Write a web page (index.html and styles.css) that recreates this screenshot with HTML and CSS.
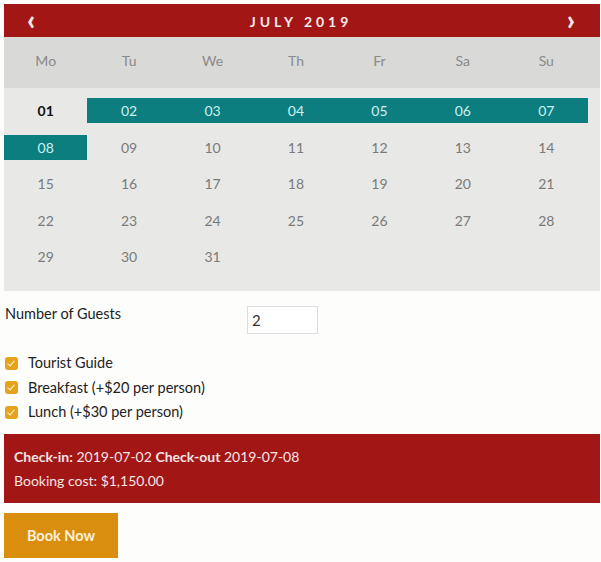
FILE: index.html
```html
<!DOCTYPE html>
<html>
  <head>
    <title>Booking</title>
    <link rel="stylesheet" href="styles.css">
  </head>
  <body>
    <section class='calendar'>
      <header class='cal-head'>
        <span class='arrow'>&#x2039;</span>
        <span class='month'>July 2019</span>
        <span class='arrow'>&#x203A;</span>
      </header>
      <div class='weekdays'>
        <span>Mo</span><span>Tu</span><span>We</span><span>Th</span><span>Fr</span><span>Sa</span><span>Su</span>
      </div>
      <div class='days'>
        <span class='today'>01</span>
        <span class='picked'>02</span>
        <span class='picked'>03</span>
        <span class='picked'>04</span>
        <span class='picked'>05</span>
        <span class='picked'>06</span>
        <span class='picked'>07</span>
        <span class='picked'>08</span>
        <span>09</span><span>10</span><span>11</span><span>12</span><span>13</span><span>14</span>
        <span>15</span><span>16</span><span>17</span><span>18</span><span>19</span><span>20</span><span>21</span>
        <span>22</span><span>23</span><span>24</span><span>25</span><span>26</span><span>27</span><span>28</span>
        <span>29</span><span>30</span><span>31</span>
      </div>
    </section>

    <div class='guests'>
      <label for='guests'>Number of Guests</label>
      <input type='text' id='guests' value='2'/>
    </div>

    <ul class='extras'>
      <li><span class='check'></span>Tourist Guide</li>
      <li><span class='check'></span>Breakfast (+$20 per person)</li>
      <li><span class='check'></span>Lunch (+$30 per person)</li>
    </ul>

    <div class='summary'>
      <p><b>Check-in:</b> 2019-07-02 <b>Check-out</b> 2019-07-08</p>
      <p>Booking cost: $1,150.00</p>
    </div>

    <button class='book'>Book Now</button>
  </body>
</html>
```

FILE: styles.css
```css
html, body {
  margin: 0;
  background: #fdfdfc;
  color: #222;
  font-family: Lato, sans-serif;
  font-size: 14.5px;
}

body {
  padding: 4px 1px 0 4px;
}

/* calendar */
.calendar {
  background: #e8e8e6;
  padding-bottom: 22px;
}

.cal-head {
  display: flex;
  align-items: center;
  justify-content: space-between;
  height: 32px;
  padding: 1px 25px 0 23px;
  background: #a31616;
  color: #f6eaea;
}

.month {
  text-transform: uppercase;
  font-weight: bold;
  font-size: 14px;
  letter-spacing: 4px;
}

.arrow {
  font-size: 28px;
  font-weight: 900;
  line-height: 1;
  margin-top: -5px;
}

.weekdays,
.days {
  display: grid;
  grid-template-columns: repeat(7, 1fr);
  width: 584px;
  text-align: center;
}

.weekdays {
  width: auto;
  padding-right: 12px;
  background: #d9d9d8;
  height: 51px;
  line-height: 48px;
  color: #8a8a8a;
  font-size: 14px;
}

.days {
  padding-top: 10px;
  row-gap: 11.5px;
  color: #7a7a7a;
  font-size: 14px;
}

.days span {
  height: 25px;
  line-height: 25px;
}

.days .today {
  color: #111;
  font-weight: bold;
}

.days .picked {
  background: #0c7e80;
  color: #cdeff0;
}

/* form */
.guests {
  display: flex;
  align-items: flex-start;
  margin-top: 14px;
  padding-left: 1px;
}

.guests label {
  width: 242px;
}

.guests input {
  width: 61px;
  height: 26px;
  margin-top: 1px;
  padding: 0 4px;
  border: 1px solid #ddd;
  font: 15px Lato, sans-serif;
  color: #333;
}

.extras {
  list-style: none;
  margin: 17px 0 0;
  padding: 0 0 0 1px;
  line-height: 24.5px;
}

.extras li {
  display: flex;
  align-items: center;
  gap: 10px;
}

.check {
  width: 13px;
  height: 13px;
  border-radius: 3px;
  background: #e7a21b;
  position: relative;
}

.check::after {
  content: '';
  position: absolute;
  left: 4px;
  top: 2px;
  width: 3px;
  height: 6px;
  border: solid #fff6e0;
  border-width: 0 1.5px 1.5px 0;
  transform: rotate(40deg);
}

.summary {
  margin-top: 9px;
  padding: 11px 10px 10px;
  background: #a31616;
  color: #f4e4e4;
  font-size: 14px;
  line-height: 24px;
}

.summary p {
  margin: 0;
}

.book {
  margin-top: 10px;
  width: 114px;
  height: 45px;
  border: none;
  background: #d98f0d;
  color: #fbf0dc;
  font: bold 14.5px Lato, sans-serif;
}
```
